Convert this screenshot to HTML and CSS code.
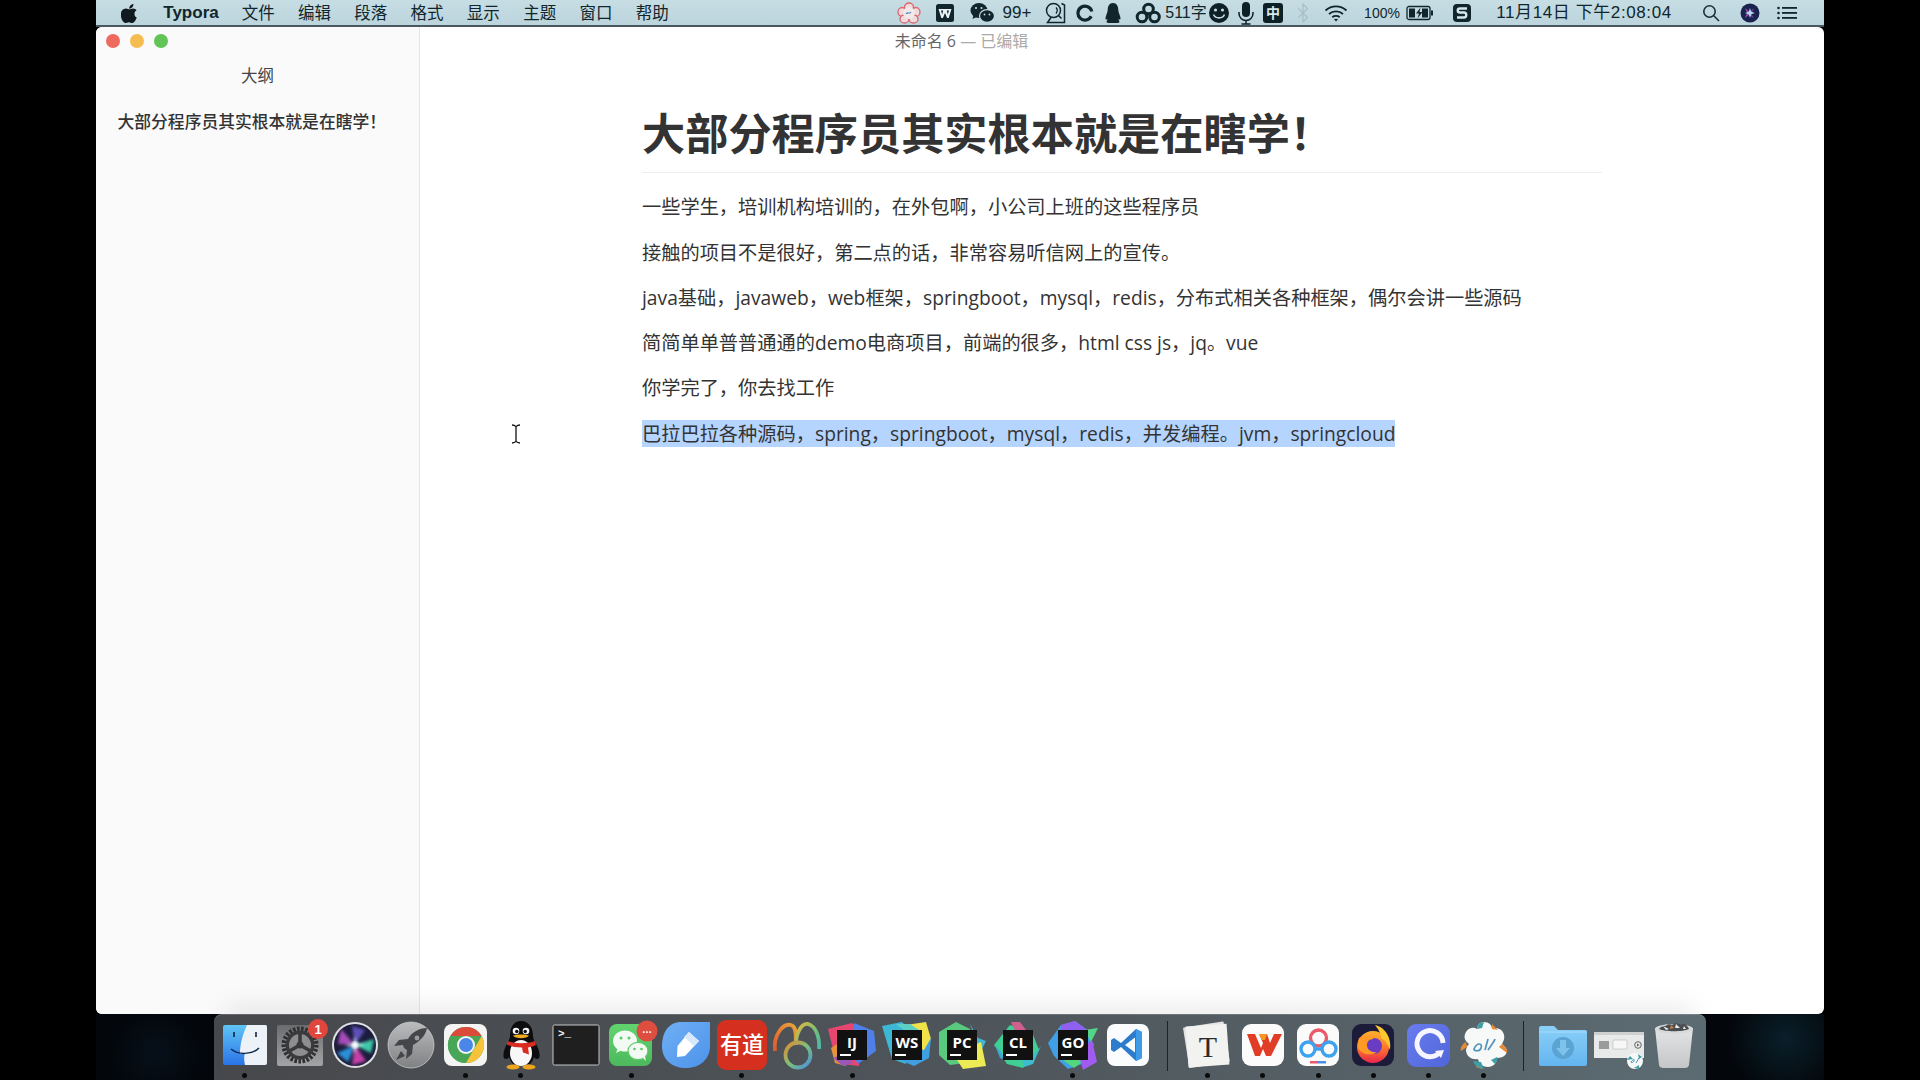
FILE: index.html
```html
<!DOCTYPE html>
<html lang="zh-CN">
<head>
<meta charset="utf-8">
<title>Typora</title>
<link rel="stylesheet" href="styles.css">
</head>
<body>
<svg class="defs" aria-hidden="true"><defs>
<linearGradient id="gFinder" x1="0" y1="0" x2="0" y2="1"><stop offset="0" stop-color="#5fc4f5"/><stop offset="1" stop-color="#2a74e8"/></linearGradient>
<linearGradient id="gPrefs" x1="0" y1="0" x2="0" y2="1"><stop offset="0" stop-color="#6b6c6e"/><stop offset="1" stop-color="#a3a4a5"/></linearGradient>
<linearGradient id="gRocket" x1="0" y1="0" x2="0" y2="1"><stop offset="0" stop-color="#bbbcbd"/><stop offset="1" stop-color="#808183"/></linearGradient>
<linearGradient id="gWechat" x1="0" y1="0" x2="0" y2="1"><stop offset="0" stop-color="#62d46e"/><stop offset="1" stop-color="#4db85c"/></linearGradient>
<linearGradient id="gNote" x1="0" y1="0" x2="1" y2="1"><stop offset="0" stop-color="#6fb0f5"/><stop offset="1" stop-color="#4d92ea"/></linearGradient>
<linearGradient id="gNavL" x1="0" y1="1" x2="1" y2="0"><stop offset="0" stop-color="#e2592e"/><stop offset="1" stop-color="#e8a43a"/></linearGradient>
<linearGradient id="gNavR" x1="0" y1="0" x2="1" y2="1"><stop offset="0" stop-color="#e6b83c"/><stop offset=".6" stop-color="#6cc07a"/><stop offset="1" stop-color="#4cb8b0"/></linearGradient>
<linearGradient id="gNavC" x1="0" y1="0" x2="1" y2="1"><stop offset="0" stop-color="#e8882e"/><stop offset=".5" stop-color="#7cc27a"/><stop offset="1" stop-color="#4a8fe0"/></linearGradient>
<linearGradient id="gCloud" x1="0" y1="0" x2="1" y2="1"><stop offset="0" stop-color="#6a7cf0"/><stop offset="1" stop-color="#4f66d8"/></linearGradient>
<linearGradient id="gFox" x1="0" y1="0" x2="0" y2="1"><stop offset="0" stop-color="#ffb02e"/><stop offset=".5" stop-color="#ff7a28"/><stop offset="1" stop-color="#e8254e"/></linearGradient>
<linearGradient id="gFolder" x1="0" y1="0" x2="0" y2="1"><stop offset="0" stop-color="#8bd0f8"/><stop offset="1" stop-color="#63b5ef"/></linearGradient>
<linearGradient id="gTrash" x1="0" y1="0" x2="0" y2="1"><stop offset="0" stop-color="#e2e4e5"/><stop offset="1" stop-color="#c4c6c7"/></linearGradient>
<filter id="soft"><feGaussianBlur stdDeviation="1.600"/></filter>
</defs></svg>

<div class="screen">
  <header class="menubar">
    <nav class="menu">
      <span class="apple"><svg width="18" height="20" viewBox="0 0 18 20"><path fill="#101a1e" d="M12.4 1c.1 1.300-.4 2.500-1.100 3.300-.8.900-1.900 1.500-3 1.400-.1-1.200.4-2.400 1.100-3.200C10.200 1.600 11.400 1 12.400 1zM15.800 14.600c-.5 1.100-.7 1.600-1.300 2.600-.9 1.300-2 2.800-3.400 2.800-1.300 0-1.600-.8-3.300-.8s-2.100.8-3.300.8c-1.400 0-2.500-1.400-3.300-2.700C-.5 13.900-.8 9.500 1.200 7.300 2.200 6.100 3.700 5.400 5 5.400c1.500 0 2.400.8 3.600.8 1.100 0 1.800-.8 3.500-.8 1.300 0 2.600.7 3.500 1.900-3.100 1.700-2.600 6.100.2 7.300z"/></svg></span>
      <span class="app">Typora</span>
      <span class="item">文件</span><span class="item">编辑</span><span class="item">段落</span><span class="item">格式</span><span class="item">显示</span><span class="item">主题</span><span class="item">窗口</span><span class="item">帮助</span>
    </nav>
    <div class="tray">
      <svg width="24" height="22" viewBox="0 0 24 22"><g fill="#f0dadc" stroke="#d9666c" stroke-width="1.300"><ellipse cx="12" cy="5" rx="4.500" ry="4"/><ellipse cx="5" cy="10" rx="4" ry="4.500"/><ellipse cx="19" cy="10" rx="4" ry="4.500"/><ellipse cx="7.500" cy="17" rx="4.500" ry="4"/><ellipse cx="16.500" cy="17" rx="4.500" ry="4"/></g><circle cx="12" cy="11" r="6" fill="#f0eaea"/><path d="M9 12c2-3 3 1 5-2" stroke="#5a86b8" stroke-width="1.200" fill="none"/></svg>
      <svg width="20" height="20" viewBox="0 0 20 20"><rect x="1" y="1" width="18" height="18" rx="2.500" fill="#10262c"/><path d="M3.500 6h13l-2.800 9h-1.600L10 10l-2.100 5H6.300zM6 7.500l1.200 4 1-4zM11.800 7.500l1 4 1.200-4z" fill="#e8f2f4" fill-rule="evenodd"/></svg>
      <svg width="25" height="22" viewBox="0 0 25 22"><ellipse cx="9" cy="8.500" rx="8.500" ry="7.500" fill="#10262c"/><path d="M3.500 13l-1 4 4-2z" fill="#10262c"/><ellipse cx="17" cy="14" rx="7.500" ry="6.300" fill="#10262c" stroke="#c2d9e1" stroke-width="1.200"/><circle cx="6" cy="6" r="1.100" fill="#c2d9e1"/><circle cx="11.500" cy="6" r="1.100" fill="#c2d9e1"/><circle cx="14.500" cy="12.500" r=".9" fill="#c2d9e1"/><circle cx="19.500" cy="12.500" r=".9" fill="#c2d9e1"/></svg>
      <span class="tt big">99+</span>
      <svg width="22" height="22" viewBox="0 0 22 22" fill="none" stroke="#10262c" stroke-width="1.500"><circle cx="8.500" cy="8.500" r="7"/><path d="M13.500 13.500l3 3M6 15.500l-3.500 5h17V3l-3-1.500"/><path d="M11 5.500c1.500 1.500 1.500 4 0 6" stroke-width="1.300"/></svg>
      <svg width="18" height="18" viewBox="0 0 18 18"><path d="M15.200 12.300A7 7 0 1 1 15.800 7.500" fill="none" stroke="#10262c" stroke-width="3.200"/></svg>
      <svg width="18" height="22" viewBox="0 0 18 22"><path d="M9 1c3.800 0 5.300 3.300 5.300 7.300 0 2 2.200 5.700 2.200 8.200 0 1.500-1 1.300-2 .5.300 1.800 1 2.400 1 3 0 1-3 1-6.500 1s-6.500 0-6.500-1c0-.6.700-1.200 1-3-1 .8-2 1-2-.5 0-2.500 2.200-6.200 2.200-8.200C3.700 4.300 5.200 1 9 1z" fill="#10262c"/></svg>
      <svg width="26" height="22" viewBox="0 0 26 22" fill="none" stroke="#10262c" stroke-width="3"><circle cx="13.500" cy="7" r="4.800"/><circle cx="7" cy="15" r="4.800"/><circle cx="19.500" cy="15" r="4.800"/></svg>
      <span class="tt">511字</span>
      <svg width="22" height="22" viewBox="0 0 22 22"><circle cx="11" cy="11" r="10" fill="#0d2026"/><circle cx="7.500" cy="8" r="1.600" fill="#c2d9e1"/><circle cx="14.500" cy="8" r="1.600" fill="#c2d9e1"/><path d="M5.500 12.500c2 4.500 9 4.500 11 0" stroke="#c2d9e1" stroke-width="1.600" fill="none"/></svg>
      <svg width="18" height="24" viewBox="0 0 18 24"><rect x="5" y="1" width="8" height="15" rx="4" fill="#0d2026"/><path d="M2 11v1.500a7 7 0 0 0 14 0V11M9 19.500V23M4.500 23h9" fill="none" stroke="#0d2026" stroke-width="1.500"/></svg>
      <span class="ime">中</span>
      <svg width="12" height="20" viewBox="0 0 12 20"><path d="M1.500 5.500l9 9L6 19V1l4.500 4.500-9 9" fill="none" stroke="#a7bec6" stroke-width="1.200"/></svg>
      <svg width="24" height="18" viewBox="0 0 24 18" fill="none" stroke="#10262c" stroke-width="1.800"><path d="M1.500 6.500c6-5.500 15-5.500 21 0M5 10c4-3.500 10-3.500 14 0M8.300 13.200c2-1.700 5.400-1.700 7.400 0"/><path d="M12 17.500l-2-2.200c1-.9 3-.9 4 0z" fill="#10262c" stroke="none"/></svg>
      <span class="tt small">100%</span>
      <svg width="28" height="16" viewBox="0 0 28 16"><rect x="1" y="1.500" width="23" height="13" rx="2" fill="none" stroke="#10262c" stroke-width="1.300"/><path d="M3 3.500h6v9H3zM16 3.500h6v9h-6z" fill="#10262c"/><rect x="25" y="5.500" width="2" height="5" fill="#10262c"/><path d="M14.500 2.500l-4.500 6h3l-1.500 5 5-6.500h-3z" fill="#10262c"/></svg>
      <svg width="20" height="20" viewBox="0 0 20 20"><rect x="1" y="1" width="18" height="18" rx="4" fill="#10262c"/><path d="M15 5.500H8c-3 0-3 4 0 4h4c3 0 3 5 0 5H5" fill="none" stroke="#d6e6eb" stroke-width="2.400"/></svg>
      <span class="tt date">11月14日 下午2:08:04</span>
      <svg width="18" height="18" viewBox="0 0 18 18" fill="none" stroke="#1d3036" stroke-width="1.600"><circle cx="7.500" cy="7.500" r="5.700"/><path d="M11.800 11.800L17 17"/></svg>
      <svg width="20" height="20" viewBox="0 0 20 20"><circle cx="10" cy="10" r="9.500" fill="#1a2350"/><path d="M5 5l5 4 4-4-3 6 3 4-5-3-4 3 2-5z" fill="#c259c8" opacity=".75"/><path d="M10 5l1.200 3.800L15 10l-3.800 1.200L10 15l-1.200-3.800L5 10l3.800-1.200z" fill="#b9d7f0"/></svg>
      <svg width="20" height="14" viewBox="0 0 20 14" fill="#10262c"><circle cx="1.500" cy="2" r="1.300"/><circle cx="1.500" cy="7" r="1.300"/><circle cx="1.500" cy="12" r="1.300"/><rect x="5" y="1" width="15" height="1.800"/><rect x="5" y="6" width="15" height="1.800"/><rect x="5" y="11" width="15" height="1.800"/></svg>
    </div>
  </header>

  <section class="window">
    <aside class="sidebar">
      <div class="lights"><i class="red"></i><i class="yellow"></i><i class="green"></i></div>
      <div class="side-title">大纲</div>
      <div class="outline">大部分程序员其实根本就是在瞎学！</div>
    </aside>
    <main class="editor">
      <div class="doc">
        <h1>大部分程序员其实根本就是在瞎学！</h1>
        <p>一些学生，培训机构培训的，在外包啊，小公司上班的这些程序员</p>
        <p>接触的项目不是很好，第二点的话，非常容易听信网上的宣传。</p>
        <p>java基础，javaweb，web框架，springboot，mysql，redis，分布式相关各种框架，偶尔会讲一些源码</p>
        <p>简简单单普普通通的demo电商项目，前端的很多，html css js，jq。vue</p>
        <p>你学完了，你去找工作</p>
        <p><span class="sel">巴拉巴拉各种源码，spring，springboot，mysql，redis，并发编程。jvm，springcloud</span></p>
      </div>
    </main>
    <div class="win-title">未命名 6 <span class="dim">— 已编辑</span></div>
    <svg class="ibeam" width="10" height="20" viewBox="0 0 10 20" fill="none" stroke="#111" stroke-width="1.300"><path d="M1 1c2 0 3 .6 4 1.600C6 1.600 7 1 9 1M5 2.600v14.800M1 19c2 0 3-.6 4-1.600 1 1 2 1.600 4 1.600"/></svg>
  </section>

  <footer class="desk">
    <div class="dock">
      <div class="cell"><svg viewBox="0 0 50 50"><rect x="3" y="5" width="44" height="40" rx="2" fill="url(#gFinder)"/><path d="M27 5h18a2 2 0 0 1 2 2v36a2 2 0 0 1-2 2H25c-1-4-1-7-.5-11H20c0-11 3-20 7-29z" fill="#edf2f8"/><path d="M14 12v5M36 12v5" stroke="#16233f" stroke-width="1.600"/><path d="M11 29c7 6 21 6 28-1" stroke="#0f2a52" stroke-width="1.500" fill="none"/></svg><b></b></div>
      <div class="cell"><svg viewBox="0 0 50 50"><rect x="2" y="5" width="46" height="41" rx="2" fill="url(#gPrefs)"/><circle cx="25" cy="25" r="16" fill="none" stroke="#2f2f31" stroke-width="5" stroke-dasharray="2.500 1.500"/><circle cx="25" cy="25" r="14.500" fill="#3a3a3c"/><circle cx="25" cy="25" r="11" fill="#8e8e8f"/><path d="M25 25V13M25 25l10.500 6M25 25l-10.500 6" stroke="#3a3a3c" stroke-width="3.600"/><circle cx="25" cy="25" r="3.500" fill="#3a3a3c"/><circle cx="43" cy="9" r="10" fill="#e0463c"/><text x="43" y="14" class="badge">1</text></svg><b class="off"></b></div>
      <div class="cell"><svg viewBox="0 0 50 50"><circle cx="25" cy="25" r="23" fill="#dfe1e3"/><circle cx="25" cy="25" r="21" fill="#1c1d3c"/><g filter="url(#soft)"><path d="M25 25L11 9l-3 15z" fill="#a64bb8"/><path d="M25 25L22 6l13 4z" fill="#5f50b8"/><path d="M25 25l19-6-3 14z" fill="#3ec8a8"/><path d="M25 25l11 16-14 4z" fill="#c43fa8"/><path d="M25 25L7 33l11 9z" fill="#2c8fd8"/></g><path d="M25 16l1.500 7.500 9 1.500-9 1.500L25 34l-1.500-7.500-9-1.500 9-1.500z" fill="#dff7fb" filter="url(#soft)"/><circle cx="25" cy="25" r="3" fill="#fff" filter="url(#soft)"/></svg><b class="off"></b></div>
      <div class="cell"><svg viewBox="0 0 50 50"><circle cx="25" cy="25" r="23" fill="url(#gRocket)" stroke="#c9cacb" stroke-width=".8"/><path d="M41 8c-8 0-15 4-19 11l-9 1-5 6 9-1 1 3 3 2-1 9 6-5 1-9c7-4 13-10 14-17zM15 31l-5 9 9-4z" fill="#45464a"/><circle cx="31" cy="18" r="2.400" fill="#9a9b9c"/></svg><b class="off"></b></div>
      <div class="cell"><svg viewBox="0 0 50 50"><rect x="3" y="4" width="43" height="42" rx="8" fill="#f4f4f2"/><circle cx="25" cy="25" r="18" fill="#4aa657"/><path d="M9.400 16A18 18 0 0 1 40.600 16H25z" fill="#dc4a3a"/><path d="M40.600 16A18 18 0 0 1 25 43l7.800-13.500z" fill="#f6c33a"/><path d="M9.400 16L17.200 29.500 25 43A18 18 0 0 1 9.400 16z" fill="#4aa657"/><circle cx="25" cy="25" r="9" fill="#f4f4f2"/><circle cx="25" cy="25" r="7" fill="#4a85e8"/></svg><b></b></div>
      <div class="cell"><svg viewBox="0 0 50 50"><path d="M25 1c8 0 12 7 12 15 0 4 4 8 6 15 1 4 1 8-2 8-2 0-2-1-3-2-1 3-2 5-4 7H17c-2-2-3-4-4-7-1 1-1 2-3 2-3 0-3-4-2-8 2-7 6-11 6-15C14 8 17 1 25 1z" fill="#0d0d0f"/><ellipse cx="25" cy="33" rx="11" ry="13" fill="#f7f7f7"/><circle cx="20" cy="11" r="3.300" fill="#f4f4f4"/><circle cx="30" cy="11" r="3.300" fill="#f4f4f4"/><circle cx="20.800" cy="11.500" r="1.700" fill="#0d0d0f"/><circle cx="29.200" cy="11.500" r="1.700" fill="#0d0d0f"/><path d="M17 15.500c4-1.500 12-1.500 16 0-2 3.500-14 3.500-16 0z" fill="#f0ad1e"/><path d="M11 21c8 3 20 3 28 0l1 4c-3 1.500-5 2-8 2.500l1 7-6-2-1-5c-6 0-11-1-15-3z" fill="#d92c20"/><ellipse cx="17" cy="47" rx="6.500" ry="2.500" fill="#eea41b"/><ellipse cx="33" cy="47" rx="6.500" ry="2.500" fill="#eea41b"/></svg><b></b></div>
      <div class="cell"><svg viewBox="0 0 50 50"><rect x="2" y="5" width="46" height="40" rx="1.500" fill="#1f1f20" stroke="#c5c7c8" stroke-width="1"/><text x="7" y="17" class="term">&gt;_</text></svg><b class="off"></b></div>
      <div class="cell"><svg viewBox="0 0 50 50"><rect x="3" y="4" width="43" height="42" rx="8" fill="url(#gWechat)"/><ellipse cx="19" cy="21" rx="12" ry="10.500" fill="#f3faf3"/><path d="M12 28l-2 5 6-3z" fill="#f3faf3"/><ellipse cx="32" cy="31" rx="10" ry="8.700" fill="#f3faf3" stroke="#5cc868" stroke-width="1.200"/><path d="M37 38l3 3-1-5z" fill="#f3faf3"/><circle cx="15" cy="18" r="1.500" fill="#5cc868"/><circle cx="23" cy="18" r="1.500" fill="#5cc868"/><circle cx="28.500" cy="29" r="1.300" fill="#5cc868"/><circle cx="35.500" cy="29" r="1.300" fill="#5cc868"/><circle cx="41" cy="11" r="10.500" fill="#dd4e41"/><text x="41" y="13" class="badge small">…</text></svg><b></b></div>
      <div class="cell"><svg viewBox="0 0 50 50"><path d="M20 2h29v24c0 13-10 22-24 22S1 40 1 26 8 2 20 2z" fill="url(#gNote)"/><path d="M28 12l10 9-14 15-8 1 .5-11z" fill="#fff"/><path d="M28 12l10 9-5 5-10-9z" fill="#d8e8fb"/></svg><b class="off"></b></div>
      <div class="cell"><svg viewBox="0 0 50 50"><rect x="0" y="0" width="50" height="50" rx="9" fill="#d5301f"/><text x="25" y="33" class="yd" textLength="44" lengthAdjust="spacingAndGlyphs">有道</text></svg><b></b></div>
      <div class="cell"><svg viewBox="0 0 50 50" fill="none" stroke-width="3.800"><path d="M3 31C1 15 11 3 19 5c7 2 4 14 5 20" stroke="url(#gNavL)"/><path d="M24 24c0-10 5-21 12-20 8 2 12 14 11 25" stroke="url(#gNavR)"/><circle cx="26" cy="35" r="12.500" stroke="url(#gNavC)"/></svg><b class="off"></b></div>
      <div class="cell"><svg viewBox="0 0 50 50"><path d="M1 9l24-6 10 9-3 34-17-2-8-11z" fill="#e6466f"/><path d="M4 28l12-8 3 26-11-3z" fill="#e7923a"/><path d="M27 3l20 8 2 20-18 13-7-10z" fill="#4f80ea"/><path d="M6 38l10 8 10-3-8-10z" fill="#9c56b8"/><rect x="10" y="10" width="30" height="30" fill="#111"/><text x="25" y="28" class="jb">IJ</text><rect x="13" y="34" width="11" height="2" fill="#fff"/></svg><b></b></div>
      <div class="cell"><svg viewBox="0 0 50 50"><path d="M0 6l20-4 8 8-4 34-14-5z" fill="#3cb8d6"/><path d="M24 5l20-3 5 17-7 13z" fill="#f2e24a"/><path d="M14 4l14 0 12 8-10 4z" fill="#5cd0c4"/><path d="M24 30l18 0 7-12-2 20-15 8-14-6z" fill="#3f9fe0"/><rect x="10" y="10" width="30" height="30" fill="#111"/><text x="25" y="28" class="jb">WS</text><rect x="13" y="34" width="11" height="2" fill="#fff"/></svg><b class="off"></b></div>
      <div class="cell"><svg viewBox="0 0 50 50"><path d="M2 12L19 2l14 7 3 33-23 3-11-10z" fill="#58c97d"/><path d="M33 4l8 14 8 3-6 12z" fill="#40b6d8"/><path d="M16 34l28-12 5 24-23 3z" fill="#ecea55"/><rect x="10" y="10" width="30" height="30" fill="#111"/><text x="25" y="28" class="jb">PC</text><rect x="13" y="34" width="11" height="2" fill="#fff"/></svg><b class="off"></b></div>
      <div class="cell"><svg viewBox="0 0 50 50"><path d="M1 25L17 5l22 7 7 18-8 8-8 10-16-4z" fill="#3fcf95"/><path d="M18 2l9 0 6 8-10 3z" fill="#cf5f8e"/><path d="M2 25L14 40l-7-2z" fill="#3fa7d4"/><path d="M28 36l14-2 6-8-8 18-9 3z" fill="#3dbcd0"/><rect x="10" y="10" width="30" height="30" fill="#111"/><text x="25" y="28" class="jb">CL</text><rect x="13" y="34" width="11" height="2" fill="#fff"/></svg><b class="off"></b></div>
      <div class="cell"><svg viewBox="0 0 50 50"><path d="M0 23L13 5 27 1 38 9 46 25 34 44 20 49 6 36z" fill="#3fa0e8"/><path d="M13 5l14-4 11 8-2 10H12z" fill="#8f5ff0"/><path d="M36 10l14-2-7 14z" fill="#54d38a"/><path d="M12 38l14 10 8-6-12-8z" fill="#53d67e"/><path d="M30 32l14-12 5 22-14 8z" fill="#a15bf0"/><rect x="10" y="10" width="30" height="30" fill="#111"/><text x="25" y="28" class="jb">GO</text><rect x="13" y="34" width="11" height="2" fill="#fff"/></svg><b></b></div>
      <div class="cell"><svg viewBox="0 0 50 50"><rect x="4" y="4" width="42" height="42" rx="8" fill="#fbfcfd"/><path d="M33 9l6 3v26l-6 3-15-14-7 5-3-2v-10l3-2 7 5z" fill="#2c7ccb"/><path d="M33 9l6 3v26l-6 3z" fill="#3f9ae8"/><path d="M32 17.500L22 25l10 7.500z" fill="#fbfcfd"/></svg><b class="off"></b></div>
      <div class="sep"></div>
      <div class="cell"><svg viewBox="0 0 50 50"><rect x="3" y="4" width="41" height="41" rx="1" fill="#e3e3e3" transform="rotate(-9 25 25)"/><rect x="4" y="5" width="41" height="41" fill="#f2f2f1" transform="rotate(-4 25 25)"/><text x="25" y="37" class="typ">T</text></svg><b></b></div>
      <div class="cell"><svg viewBox="0 0 50 50"><rect x="4" y="4" width="42" height="42" rx="9" fill="#fbfbfb"/><path d="M9 14h8l6 14 2-5-4-9h8l3 9 4-9h8L33 36h-5l-3-7-3 7h-5z" fill="#e13d26"/><path d="M21 14h8l-2 6h-3z" fill="#f39a1f"/></svg><b></b></div>
      <div class="cell"><svg viewBox="0 0 50 50" fill="none" stroke-width="3.400"><rect x="4" y="4" width="42" height="42" rx="9" fill="#fbfbfb" stroke="none"/><circle cx="25.500" cy="18" r="8" stroke="#ea5a68"/><circle cx="15" cy="29" r="7" stroke="#3ea3ee"/><circle cx="36" cy="29" r="7" stroke="#3ea3ee"/><path d="M22 29h7" stroke="#3ea3ee"/><rect x="17" y="41" width="8" height="2.500" fill="#ea5a68" stroke="none"/><rect x="25" y="41" width="8" height="2.500" fill="#4a90e8" stroke="none"/></svg><b></b></div>
      <div class="cell"><svg viewBox="0 0 50 50"><rect x="4" y="4" width="42" height="42" rx="9" fill="#1c1b3a"/><circle cx="25" cy="27" r="16" fill="url(#gFox)"/><path d="M27 5c10 2 17 13 15 25-2-6-5-10-9-12 0-5-3-9-6-13z" fill="#ffc72f"/><circle cx="26" cy="26" r="8" fill="#6a3cc4"/><path d="M11 18c5-3 12-2 15 1-4 0-7 2-7 6 0 5 5 8 10 7-5 4-15 3-19-4 0-4 0-7 1-10z" fill="#ff9a26"/></svg><b></b></div>
      <div class="cell"><svg viewBox="0 0 50 50"><rect x="3" y="4" width="43" height="43" rx="9" fill="url(#gCloud)"/><path d="M36 32a13 13 0 1 1 3-9" fill="none" stroke="#f5f6ff" stroke-width="5"/><path d="M31 31l6 7 3-8z" fill="#f5f6ff"/></svg><b></b></div>
      <div class="cell"><svg viewBox="0 0 50 50"><path d="M25 2c5 0 8 3 8 7 6-2 11 1 12 6 1 4-1 7-2 9 4 3 6 6 4 10-2 3-6 4-9 4 0 5-4 9-9 9s-9-3-10-8c-6 1-11-2-12-8 0-3 1-5 3-7C6 21 4 17 7 12s8-5 11-3c0-4 3-7 7-7z" fill="#f6f9f8"/><path d="M7 22C3 24 1 28 2 31l6-4zM33 4l6 6-6-1zM43 24c4 3 6 6 5 9l-8-6zM17 47l6 2-4-8z" fill="#e58a36"/><path d="M25 2c-4 0-7 3-7 7l5-1zM14 41c1 4 6 8 11 8l-3-7zM36 44c2-3 3-5 2-7l-6 3z" fill="#3f9fa5"/><path d="M15 29c3-7 9-6 7-1-1 4-7 3-7 1zM26 30l3-11M29 30c2-3 6-8 7-11" fill="none" stroke="#5191ba" stroke-width="1.700"/></svg><b></b></div>
      <div class="sep"></div>
      <div class="cell"><svg viewBox="0 0 50 50"><path d="M1 8a2 2 0 0 1 2-2h13l4 4h27a2 2 0 0 1 2 2v32a2 2 0 0 1-2 2H3a2 2 0 0 1-2-2z" fill="url(#gFolder)"/><path d="M1 12h48" stroke="#a7dcfa" stroke-width="1"/><circle cx="25" cy="28" r="11" fill="#5ba3d2"/><path d="M22 20h6v8h4l-7 8-7-8h4z" fill="#7fc3ec"/></svg><b class="off"></b></div>
      <div class="cell"><svg viewBox="0 0 50 50"><rect x="0" y="12" width="50" height="26" fill="#e8e9e9"/><rect x="0" y="12" width="50" height="3" fill="#cfd1d1"/><rect x="5" y="21" width="10" height="8" fill="#9a9c9c"/><rect x="19" y="20" width="14" height="9" rx="1" fill="#f7f7f7" stroke="#b5b6b6" stroke-width=".6"/><circle cx="44" cy="25" r="3.300" fill="none" stroke="#666" stroke-width="1"/><path d="M43 23.500l2.500 1.500-2.500 1.500z" fill="#666"/><circle cx="41" cy="41" r="8" fill="#f6f9f8"/><path d="M33 40l3-4 3 3zM44 34l4 3-3 2zM40 48l5 1 0-4z" fill="#3f9fa5"/><path d="M37 42c2-3 4-3 3-1-1 2-3 2-3 1zM42 43l3-5" stroke="#5191ba" stroke-width="1" fill="none"/></svg><b class="off"></b></div>
      <div class="cell"><svg viewBox="0 0 50 50"><path d="M6 8h38l-4 37c-.3 2-2 3-4 3H14c-2 0-3.700-1-4-3z" fill="url(#gTrash)"/><ellipse cx="25" cy="9" rx="19" ry="5" fill="#d7d9da"/><path d="M10 9c3-4 6-2 8-4s5 1 7-1 6 1 8 0 6 2 7 5c-6 3-24 3-30 0z" fill="#4a4d50"/><path d="M14 6l6 3-3 1zM27 4l4 4-5 0zM35 6l2 3-3 0z" fill="#e9e9e9"/><path d="M22 5l3 3-4 1z" fill="#cc7b3c"/></svg><b class="off"></b></div>
    </div>
  </footer>
</div>
</body>
</html>
```

FILE: styles.css
```css
* { box-sizing: border-box; }
html, body { margin: 0; height: 100%; background: #000; overflow: hidden; }
body { font-family: "Open Sans", "Noto Sans CJK SC", sans-serif; color: #333; }
.defs { position: absolute; width: 0; height: 0; }
.screen { width: 1728px; height: 1080px; margin: 0 96px; display: flex; flex-direction: column; }

/* menu bar */
.menubar { height: 27px; flex: none; display: flex; justify-content: space-between; padding-right: 4px;
  background: linear-gradient(#c6dde4, #bcd4dc); border-bottom: 2px solid #49585e;
  font: 16px/24px "Liberation Sans", "Noto Sans CJK SC", sans-serif; color: #10262c; }
.menu { display: flex; align-items: center; padding-top: 1px; }
.apple { width: 67px; display: flex; justify-content: center; }
.app { width: 56px; margin-right: 11px; text-align: center; font-weight: 700; font-size: 17px; }
.item { width: 56.3px; text-align: center; font-size: 16.5px; }
.tray { display: grid; align-items: center; justify-items: center; padding-top: 1px;
  grid-template-columns: 18px 54px 20px 50px 28px 30px 26px 44px 32px 34px 20px 34px 26px 40px 52px 24px 60px 184px 70px 8px 66px; }
.tray svg { display: block; }
.tt { white-space: nowrap; }
.big { font-size: 17px; }
.small { font-size: 14px; }
.date { font-size: 17px; letter-spacing: .6px; }
.ime { width: 20px; height: 20px; background: #0d2026; color: #d6e6eb; border-radius: 3px; font-size: 14px; font-weight: 700; line-height: 20px; text-align: center; }

/* window */
.window { position: relative; flex: 1; display: flex; background: #fff; border-radius: 6px; overflow: hidden; }
.window::after { content: ""; position: absolute; left: 130px; right: 130px; bottom: -8px; height: 8px; box-shadow: 0 -2px 26px rgba(0, 0, 0, .22); }
.sidebar { width: 324px; flex: none; background: #fafafa; border-right: 1px solid #e6e6e6; padding-top: 7px; }
.lights { display: flex; gap: 10px; padding-left: 10px; }
.lights i { width: 14px; height: 14px; border-radius: 50%; }
.red { background: #ee6a5f; }
.yellow { background: #f5bd4f; }
.green { background: #61c454; }
.side-title { margin-top: 13px; text-align: center; font-size: 16.5px; line-height: 30px; color: #444; }
.outline { margin: 16px 0 0 21.500px; font-size: 16.8px; font-weight: 500; line-height: 30px; color: #333; white-space: nowrap; }
.editor { flex: 1; padding: 77px 0 0 222px; }
.doc { width: 960px; display: flex; flex-direction: column; gap: 15.300px; }
h1 { margin: 0 0 4px; padding-bottom: 8px; border-bottom: 1px solid #eee; font-size: 43.2px; font-weight: 700; line-height: 60px; color: #333; white-space: nowrap; }
p { margin: 0; font-size: 19.23px; line-height: 30px; color: #333; white-space: nowrap; }
.sel { background: #b5d5ff; }
.win-title { position: absolute; top: 0; left: 3px; right: 0; text-align: center; font-size: 16px; line-height: 28px; color: #666; }
.dim { color: #aaa; }
.ibeam { position: absolute; left: 415px; top: 397px; }

/* dock */
.desk { height: 66px; flex: none; padding-left: 118px;
  background: radial-gradient(50px 50px at 60px 40px, #06101a, transparent), radial-gradient(60px 60px at 1690px 25px, #0a1f2a, transparent), #03060a; }
.dock { width: 1492px; height: 66px; display: flex; padding: 6px 0 0 3.400px; border-radius: 8px 8px 0 0;
  background: linear-gradient(90deg, #47484c, #4e555a 50%, #5c6b72); box-shadow: inset 0 1px 0 rgba(255, 255, 255, .16); }
.cell { width: 55.2px; display: flex; flex-direction: column; align-items: center; }
.cell svg { width: 50px; height: 50px; flex: none; overflow: visible; }
.cell b { width: 5px; height: 5px; margin-top: 2.500px; border-radius: 50%; background: #0a0a0a; }
.cell b.off { background: transparent; }
.sep { width: 24.600px; display: flex; justify-content: center; padding-top: 1px; }
.sep::before { content: ""; width: 1px; height: 50px; background: #1c2226; }

.badge { font: 700 13px "Liberation Sans", sans-serif; fill: #fff; text-anchor: middle; }
.badge.small { font-size: 10px; }
.term { font: 700 11px "Liberation Mono", monospace; fill: #f2f2f2; }
.yd { font: 500 23px "Noto Sans CJK SC", sans-serif; fill: #fff; text-anchor: middle; }
.jb { font: 700 15px "Open Sans", sans-serif; fill: #fff; text-anchor: middle; }
.typ { font: 400 30px "Liberation Serif", serif; fill: #2b2b2b; text-anchor: middle; }
```
